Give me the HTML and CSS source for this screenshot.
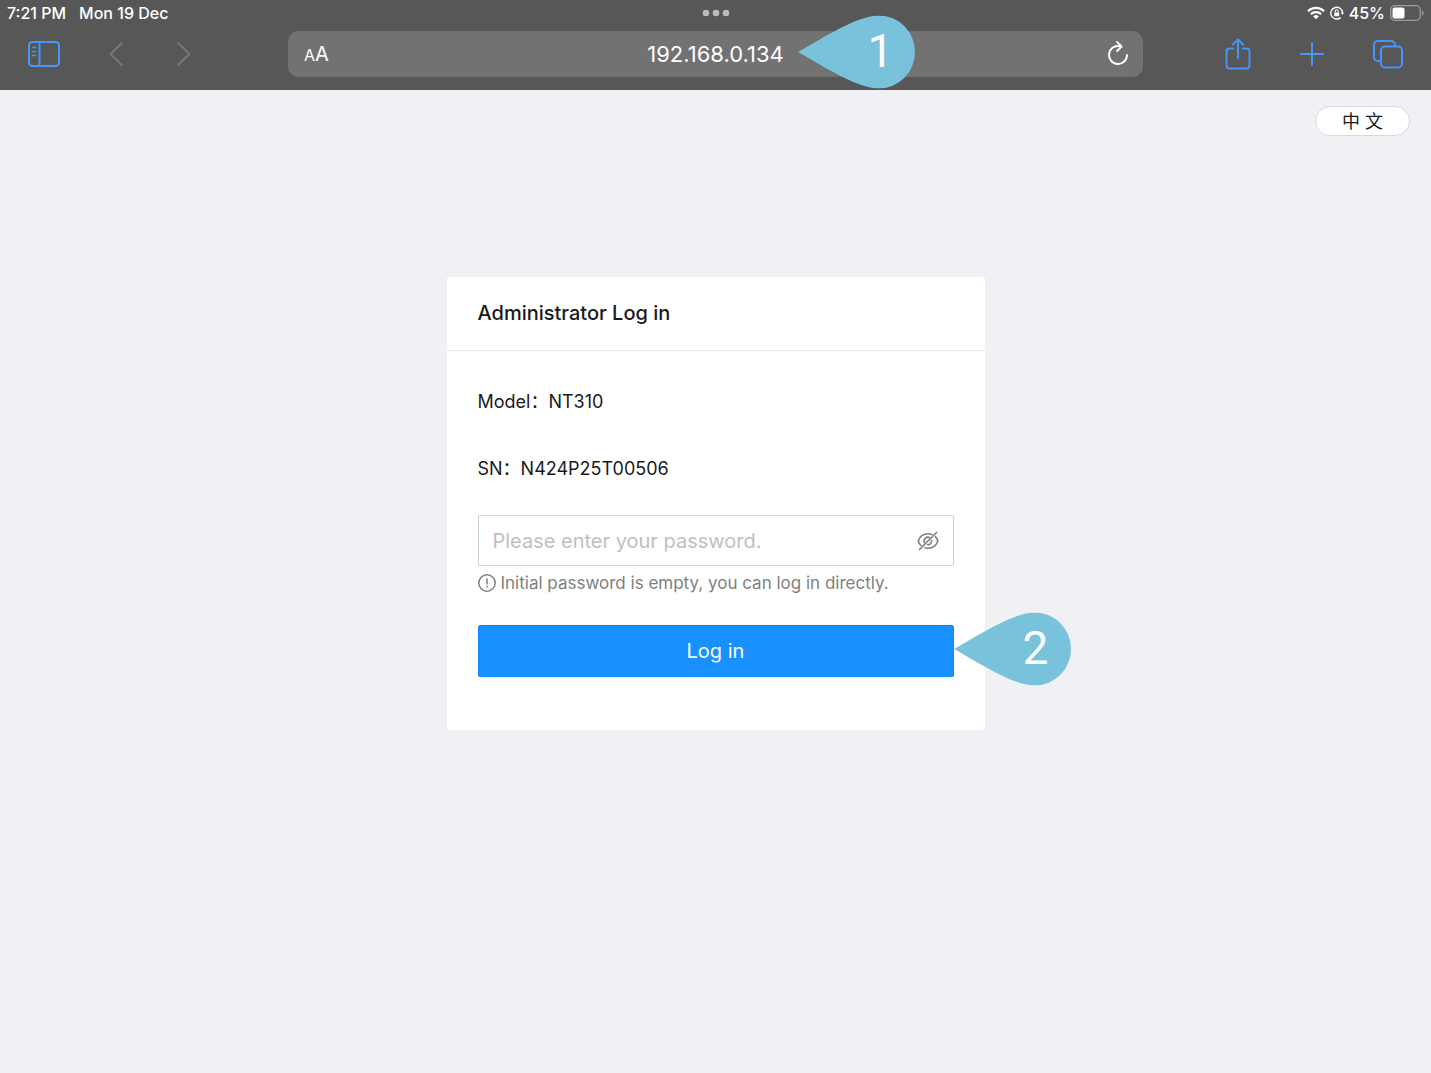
FILE: index.html
```html
<!DOCTYPE html>
<html lang="en">
<head>
    <meta charset="UTF-8">
    <meta name="viewport" content="width=device-width, initial-scale=1.0">
    <title>Administrator Log in</title>

    <link rel="stylesheet" href="styles.css">

</head>
<body>
<header class="browser">
    <div class="status">
        <div class="status-left">
            <span>7:21 PM</span>
            <span>Mon 19 Dec</span>
        </div>
        <svg class="dots" width="28" height="8" viewBox="0 0 28 8" fill="#bbb">
            <circle cx="4" cy="4" r="3.3"/><circle cx="14" cy="4" r="3.3"/><circle cx="24" cy="4" r="3.3"/>
        </svg>
        <div class="status-right">
            <svg width="18" height="14" viewBox="0 0 18 14" fill="none" stroke="#fff" stroke-width="2.3">
                <path d="M1 5.2A11.4 11.4 0 0 1 17 5.2M3.8 8.3a7.4 7.4 0 0 1 10.4 0"/>
                <path d="M9 13.3L6.2 10.4a4 4 0 0 1 5.6 0z" fill="#fff" stroke="none"/>
            </svg>
            <svg width="14" height="14" viewBox="0 0 14 14" fill="none" stroke="#fff" stroke-width="1.4">
                <path d="M10.6 11.6A5.9 5.9 0 1 1 12.6 6.6"/>
                <path d="M10.6 6.5h3.4l-1.7 2.6z" fill="#fff" stroke="none"/>
                <rect x="4.2" y="6.4" width="5" height="3.8" rx=".6" fill="#fff" stroke="none"/>
                <path d="M5.3 6.6V5.2a1.4 1.4 0 0 1 2.8 0v1.4" stroke-width="1.1"/>
            </svg>
            <span class="battery-text">45%</span>
            <svg width="34" height="16" viewBox="0 0 34 16">
                <rect x=".7" y=".7" width="29.6" height="14.6" rx="4" fill="none" stroke="#9c9c9c" stroke-width="1.3"/>
                <rect x="2.5" y="2.5" width="12" height="11" rx="2" fill="#fff"/>
                <path d="M32 5.3q1.7.6 1.7 2.7t-1.7 2.7z" fill="#9c9c9c"/>
            </svg>
        </div>
    </div>

    <div class="toolbar">
        <nav class="tools">
            <button type="button" class="tool" aria-label="Sidebar">
                <svg width="32" height="32" viewBox="0 0 32 32" fill="none" stroke="#4596f7" stroke-width="2">
                    <rect x="1" y="4" width="30" height="24" rx="3.5"/>
                    <path d="M11.5 4v24"/>
                    <path d="M4 9.5h4M4 13.5h4M4 17.5h4" stroke-width="1.6"/>
                </svg>
            </button>
            <button type="button" class="tool" aria-label="Back">
                <svg width="18" height="32" viewBox="0 0 18 32" fill="none" stroke="#777" stroke-width="2" stroke-linecap="round" stroke-linejoin="round">
                    <path d="M13 5L1.5 16L13 27"/>
                </svg>
            </button>
            <button type="button" class="tool" aria-label="Forward">
                <svg width="18" height="32" viewBox="0 0 18 32" fill="none" stroke="#777" stroke-width="2" stroke-linecap="round" stroke-linejoin="round">
                    <path d="M2 5L13.5 16L2 27"/>
                </svg>
            </button>
        </nav>

        <div class="address">
            <button type="button" class="tool text-size" aria-label="Text size"><span class="small-a">A</span>A</button>
            <input type="text" class="address-input" aria-label="Address" value="192.168.0.134">
            <button type="button" class="tool reload" aria-label="Reload">
                <svg width="22" height="28" viewBox="0 0 22 28" fill="none" stroke="#fff" stroke-width="1.9" stroke-linecap="round" stroke-linejoin="round">
                    <path d="M12.4 6.1A9 9 0 1 0 20 15"/>
                    <path d="M10 2l4.6 4.5L10 11"/>
                </svg>
            </button>
            <div class="callout callout-address">
                <svg width="117" height="73" viewBox="0 0 117 73" fill="#78c2dc">
                    <path d="M0 36.5C26 22 59 0 81 0A36 36.5 0 0 1 81 73C59 73 26 51 0 36.5z"/>
                </svg>
                <span class="callout-number">1</span>
            </div>
        </div>

        <nav class="tools tools-right">
            <button type="button" class="tool" aria-label="Share">
                <svg width="26" height="32" viewBox="0 0 26 32" fill="none" stroke="#4596f7" stroke-width="2" stroke-linecap="round" stroke-linejoin="round">
                    <path d="M8 10.5H4.5a3 3 0 0 0-3 3V27.5a3 3 0 0 0 3 3h17a3 3 0 0 0 3-3V13.5a3 3 0 0 0-3-3H18"/>
                    <path d="M13 20V1.5M8 6.5l5-5 5 5"/>
                </svg>
            </button>
            <button type="button" class="tool" aria-label="New tab">
                <svg width="24" height="32" viewBox="0 0 24 32" fill="none" stroke="#4596f7" stroke-width="2" stroke-linecap="round">
                    <path d="M1 16h22M12 5v22"/>
                </svg>
            </button>
            <button type="button" class="tool" aria-label="Tabs">
                <svg width="30" height="32" viewBox="0 0 30 32" fill="none" stroke="#4596f7" stroke-width="2">
                    <rect x="8" y="8.5" width="21" height="21" rx="4"/>
                    <path d="M8 23H5a4 4 0 0 1-4-4V7a4 4 0 0 1 4-4h13a4 4 0 0 1 4 4v1.5"/>
                </svg>
            </button>
        </nav>
    </div>
</header>

<main class="page">
    <div class="language">
        <button type="button" class="language-btn" lang="zh">中 文</button>
    </div>

    <form id="loginForm" class="card">
        <h1 class="card-title">Administrator Log in</h1>

        <div class="card-body">
            <p class="info">Model：NT310</p>
            <p class="info">SN：N424P25T00506</p>

            <div class="password">
                <input type="password" class="password-input" id="password" name="password" aria-label="Password"
                       placeholder="Please enter your password.">
                <button type="button" class="eye" aria-label="Show password">
                    <svg width="22" height="20" viewBox="0 0 22 20" fill="none" stroke="#7f7f7f" stroke-width="1.6">
                        <path d="M4.5 15C3 13.8 1.8 12 1.2 10 2.8 5.3 6.4 2.8 11 2.8q2.600 0 4.600.9M18 5.2c1.3 1.2 2.2 2.8 2.8 4.8-1.6 4.700-5.2 7.200-9.8 7.200q-2 0-3.600-.6"/>
                        <path d="M7.800 12A3.700 3.700 0 0 1 13 6.900M14.500 9a3.700 3.700 0 0 1-4.600 4.600"/>
                        <path d="M2 19L20 1"/>
                    </svg>
                </button>
            </div>
            <div class="hint">
                <svg width="18" height="18" viewBox="0 0 18 18" fill="none" stroke="#7f7f7f" stroke-width="1.5">
                    <circle cx="9" cy="9" r="8.2"/>
                    <path d="M9 4.5v6M9 11.8v1.7"/>
                </svg>
                <span>Initial password is empty, you can log in directly.</span>
            </div>

            <div class="submit">
                <button type="submit" class="login-btn">Log in</button>
                <div class="callout callout-login">
                    <svg width="117" height="73" viewBox="0 0 117 73" fill="#78c2dc">
                        <path d="M0 36.5C26 22 59 0 81 0A36 36.5 0 0 1 81 73C59 73 26 51 0 36.5z"/>
                    </svg>
                    <span class="callout-number">2</span>
                </div>
            </div>
        </div>
    </form>
</main>
</body>
</html>
```
FILE: styles.css
```css
* {
    box-sizing: border-box;
}

body {
    margin: 0;
    min-height: 100vh;
    font-family: Inter, "Noto Sans CJK SC", sans-serif;
    background-color: #f0f1f5;
    color: #1a1a1a;
}

button, input {
    font-family: inherit;
    margin: 0;
}

svg {
    display: block;
}

/* Browser bar */
.browser {
    height: 90px;
    background-color: #575757;
    color: #fff;
}

.status {
    display: grid;
    grid-template-columns: 1fr auto 1fr;
    align-items: center;
    height: 26px;
    padding: 0 7px;
    font-size: 16px;
    font-weight: 500;
    line-height: 24px;
}

.status-left {
    display: flex;
    gap: 13px;
}

.status-right {
    display: flex;
    align-items: center;
    justify-content: flex-end;
    gap: 5px;
}

.toolbar {
    display: grid;
    grid-template-columns: 27fr 80fr 27fr;
    align-items: center;
    padding-top: 5px;
}

.tools {
    display: flex;
    gap: 49px;
    padding: 0 28px;
}

.tools-right {
    justify-content: flex-end;
}

.tool {
    padding: 0;
    border: none;
    background: none;
    color: #fff;
    cursor: pointer;
}

.address {
    position: relative;
    display: flex;
    align-items: center;
    height: 46px;
    padding: 0 14px;
    border-radius: 11px;
    background-color: #727272;
}

.text-size, .reload {
    width: 28px;
    font-size: 20px;
}

.reload svg {
    margin-left: auto;
}

.small-a {
    font-size: 16px;
}

.address-input {
    flex: 1;
    min-width: 0;
    border: none;
    background: none;
    color: #fff;
    font-size: 22px;
    text-align: center;
}

/* Numbered pointers */
.callout {
    position: absolute;
    top: 50%;
    margin-top: -2px;
    transform: translateY(-50%);
    color: #fff;
    font-family: Roboto, Arial, sans-serif;
    font-size: 46px;
    line-height: 71px;
}

.callout-address {
    left: calc(50% + 83px);
}

.callout-login {
    left: 100%;
}

.callout-number {
    position: absolute;
    top: 0;
    left: 69px;
}

/* Login page */
.page {
    padding: 16px 21px;
}

.language {
    display: flex;
    justify-content: flex-end;
}

.language-btn {
    width: 95px;
    height: 30px;
    padding: 0;
    border: 1px solid #d9d9d9;
    border-radius: 15px;
    background-color: #fff;
    color: #1a1a1a;
    font-size: 18px;
    line-height: 30px;
    cursor: pointer;
}

.card {
    width: 100%;
    max-width: 538px;
    margin: 141px auto 0;
    border-radius: 2px;
    background-color: #fff;
}

.card-title {
    margin: 0;
    padding: 0 31px;
    border-bottom: 1px solid #e8e8e8;
    font-size: 20px;
    font-weight: 500;
    line-height: 73px;
}

.card-body {
    padding: 30px 31px 53px;
}

.info {
    margin: 0 0 25px;
    font-size: 18px;
    line-height: 42px;
}

.password {
    display: flex;
    align-items: center;
    height: 51px;
    padding: 0 14px;
    border: 1px solid #d0d0d0;
    border-radius: 2px;
}

.password-input {
    flex: 1;
    min-width: 0;
    padding: 0;
    border: none;
    outline: none;
    font-size: 20px;
}

.password-input::placeholder {
    color: #bfbfbf;
}

.eye {
    padding: 0;
    border: none;
    background: none;
    cursor: pointer;
}

.hint {
    display: flex;
    align-items: center;
    gap: 5px;
    margin-bottom: 25px;
    color: #7f7f7f;
    font-size: 17px;
    line-height: 34px;
}

.submit {
    position: relative;
}

.login-btn {
    display: block;
    width: 100%;
    height: 52px;
    border: 1px solid #1086fc;
    border-radius: 2px;
    background-color: #1890ff;
    box-shadow: 0 2px 0 rgba(0, 0, 0, 0.04);
    color: #fff;
    font-size: 20px;
    cursor: pointer;
}
```
